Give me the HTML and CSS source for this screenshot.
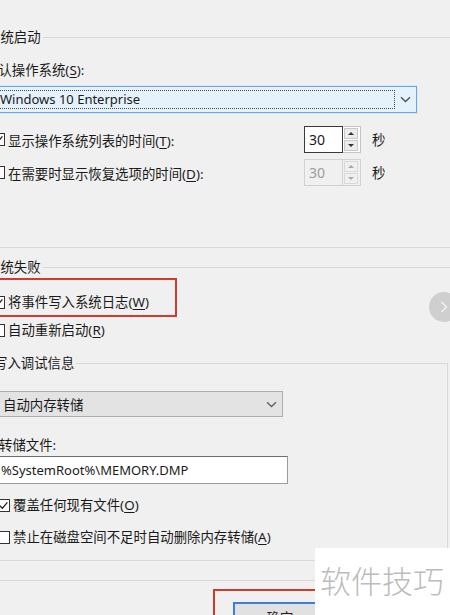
FILE: index.html
```html
<!DOCTYPE html>
<html lang="zh-CN">
<head>
<meta charset="utf-8">
<title>启动和故障恢复</title>
<link rel="stylesheet" href="styles.css">
</head>
<body>
<div class="page">
  <fieldset class="group g1">
    <legend>系统启动</legend>
    <div class="line lbl-os">默认操作系统(<u>S</u>):</div>
    <div class="combo">
      <span class="combo-focus">Windows 10 Enterprise</span>
      <span class="combo-arrow"><svg width="11" height="7" viewBox="0 0 11 7"><path d="M1 1.2 L5.5 5.5 L10 1.2" fill="none" stroke="#505050" stroke-width="1.3"/></svg></span>
    </div>
    <div class="opt-row r1">
      <span class="cb"><svg width="11" height="11" viewBox="0 0 11 11"><path d="M1.8 5.6 L4.4 8.2 L9.4 2.4" fill="none" stroke="#222" stroke-width="1.3"/></svg></span>
      <span class="opt-text">显示操作系统列表的时间(<u>T</u>):</span>
      <span class="spin">
        <span class="spin-val">30</span>
        <span class="spin-btns"><span class="sb up"></span><span class="sb down"></span></span>
      </span>
      <span class="sec">秒</span>
    </div>
    <div class="opt-row r2 disabled">
      <span class="cb"></span>
      <span class="opt-text">在需要时显示恢复选项的时间(<u>D</u>):</span>
      <span class="spin">
        <span class="spin-val">30</span>
        <span class="spin-btns"><span class="sb up"></span><span class="sb down"></span></span>
      </span>
      <span class="sec">秒</span>
    </div>
  </fieldset>

  <fieldset class="group g2">
    <legend>系统失败</legend>
    <div class="hl">
      <div class="cb-row">
        <span class="cb"><svg width="11" height="11" viewBox="0 0 11 11"><path d="M1.8 5.6 L4.4 8.2 L9.4 2.4" fill="none" stroke="#222" stroke-width="1.3"/></svg></span>
        <span>将事件写入系统日志(<u>W</u>)</span>
      </div>
    </div>
    <div class="cb-row restart">
      <span class="cb"></span>
      <span>自动重新启动(<u>R</u>)</span>
    </div>

    <fieldset class="inner">
      <legend>写入调试信息</legend>
      <div class="select">
        <span>自动内存转储</span>
        <svg width="11" height="7" viewBox="0 0 11 7"><path d="M1 1.2 L5.5 5.5 L10 1.2" fill="none" stroke="#606060" stroke-width="1.3"/></svg>
      </div>
      <div class="line lbl-file">转储文件:</div>
      <div class="input">%SystemRoot%\MEMORY.DMP</div>
      <div class="cb-row ow">
        <span class="cb"><svg width="11" height="11" viewBox="0 0 11 11"><path d="M1.8 5.6 L4.4 8.2 L9.4 2.4" fill="none" stroke="#222" stroke-width="1.3"/></svg></span>
        <span>覆盖任何现有文件(<u>O</u>)</span>
      </div>
      <div class="cb-row nodel">
        <span class="cb"></span>
        <span>禁止在磁盘空间不足时自动删除内存转储(<u>A</u>)</span>
      </div>
    </fieldset>
  </fieldset>

  <div class="footer">
    <div class="hl2"><button class="btn" type="button">确定</button></div>
  </div>
</div>

<div class="nav-circle"><svg width="8" height="12" viewBox="0 0 8 12"><path d="M1.5 1 L6.5 6 L1.5 11" fill="none" stroke="#f4f4f4" stroke-width="1.4"/></svg></div>
<div class="watermark">软件技巧</div>
</body>
</html>
```

FILE: styles.css
```css
* { box-sizing: border-box; }
html, body { margin: 0; padding: 0; }
body {
  width: 450px;
  height: 615px;
  overflow: hidden;
  position: relative;
  background: #f0f0f0;
  font-family: "Noto Sans", "Noto Sans CJK SC", sans-serif;
  font-size: 13.4px;
  color: #1a1a1a;
}
u { text-decoration: underline; text-underline-offset: 2px; text-decoration-thickness: 1px; }

.page {
  margin-left: -25px;
  width: 495px;
  padding-top: 30px;
}

fieldset {
  margin: 0;
  padding: 0;
  border: 1px solid #d9d9d9;
  min-width: 0;
}
legend {
  padding: 0 2px;
  margin-left: 9px;
  height: 14px;
  line-height: 14px;
  white-space: nowrap;
}
.line { height: 14px; line-height: 14px; white-space: nowrap; }

/* group 1 */
.g1 { padding-bottom: 61px; }
.lbl-os { margin-top: 19px; margin-left: 9px; }

.combo {
  margin-top: 9px;
  margin-left: 15px;
  width: 426px;
  height: 27px;
  display: flex;
  border: 1px solid #6fa6dd;
  background: #e5f1fb;
  box-shadow: 0 0 0 1px #d6e7f7;
}
.combo-focus {
  flex: 1;
  margin: 3px 0 3px 3px;
  border: 1px dotted #4a4a4a;
  padding-left: 4px;
  font-size: 13px;
  line-height: 17px;
  white-space: nowrap;
}
.combo-arrow {
  width: 21px;
  display: flex;
  align-items: center;
  justify-content: center;
}

.opt-row {
  display: flex;
  align-items: center;
  margin-left: 16px;
  height: 27px;
  white-space: nowrap;
}
.r1 { margin-top: 13px; }
.r2 { margin-top: 6px; }
.cb {
  flex: none;
  width: 13px;
  height: 13px;
  border: 1px solid #333;
  background: #fff;
  display: flex;
  align-items: center;
  justify-content: center;
}
.opt-text { width: 296px; margin-left: 3px; line-height: 14px; padding-top: 2px; }

.spin {
  display: flex;
  width: 57px;
  height: 27px;
  border: 1px solid #c4c4c4;
  background: #fff;
}
.spin-val {
  width: 40px;
  margin: -1px 0 -1px -1px;
  border: 1px solid #3a3a3a;
  padding-left: 4px;
  font-size: 14px;
  line-height: 25px;
}
.spin-btns {
  display: flex;
  flex-direction: column;
  gap: 1px;
  padding: 1px 2px 1px 1px;
}
.sb {
  flex: 1;
  width: 14px;
  border: 1px solid #c9c9c9;
  background: #ececec;
  display: flex;
  align-items: center;
  justify-content: center;
}
.sb.up::after {
  content: "";
  border-left: 3px solid transparent;
  border-right: 3px solid transparent;
  border-bottom: 3px solid #333;
}
.sb.down::after {
  content: "";
  border-left: 3px solid transparent;
  border-right: 3px solid transparent;
  border-top: 3px solid #333;
}
.sec { margin-left: 11px; line-height: 14px; }

.disabled .spin { border-color: #d2d2d2; background: #f0f0f0; }
.disabled .spin-val { border-color: #d2d2d2; color: #9d9d9d; }
.disabled .sb { border-color: #dadada; background: #f0f0f0; }
.disabled .sb.up::after { border-bottom-color: #a8a8a8; }
.disabled .sb.down::after { border-top-color: #a8a8a8; }

/* group 2 */
.g2 { margin-top: 12px; padding-bottom: 19px; }

.hl {
  margin-top: 4px;
  width: 201px;
  height: 39px;
  border: 2px solid #d23a30;
  padding: 15px 0 0 14px;
}
.cb-row {
  display: flex;
  align-items: center;
  gap: 3px;
  height: 14px;
  line-height: 14px;
  white-space: nowrap;
}
.restart { margin-top: 6px; margin-left: 16px; }

.inner {
  margin-top: 19px;
  margin-left: 4px;
  width: 468px;
  padding-bottom: 16px;
}
.inner legend { margin-left: 11px; }

.select {
  margin-top: 21px;
  width: 302px;
  height: 26px;
  display: flex;
  align-items: center;
  justify-content: space-between;
  padding: 0 5px 0 21px;
  border: 1px solid #adadad;
  background: #e3e3e3;
}
.lbl-file { margin-top: 21px; margin-left: 18px; }
.input {
  margin-top: 4px;
  width: 307px;
  height: 28px;
  border: 1px solid #9a9a9a;
  border-top-color: #6d6d6d;
  background: #fff;
  padding-left: 19px;
  font-size: 13px;
  line-height: 26px;
  white-space: nowrap;
}
.ow { margin-top: 14px; margin-left: 16px; }
.nodel { margin-top: 18px; margin-left: 16px; }

/* footer */
.footer { margin-top: 8px; padding-left: 238px; }
.hl2 {
  width: 140px;
  height: 40px;
  border: 2px solid #d23a30;
  border-bottom: none;
  padding: 11px 0 0 18px;
}
.btn {
  display: block;
  width: 94px;
  height: 30px;
  border: 2px solid #3d7fd3;
  background: #e1e1e1;
  font: inherit;
  color: #1f1f1f;
  padding: 0;
}

/* overlays */
.nav-circle {
  position: absolute;
  left: 429px;
  top: 292px;
  width: 30px;
  height: 30px;
  border-radius: 50%;
  background: #cfcfcf;
  display: flex;
  align-items: center;
  justify-content: center;
}
.watermark {
  position: absolute;
  left: 315px;
  top: 548px;
  width: 135px;
  height: 67px;
  background: #fff;
  padding: 12px 0 0 5px;
  font-family: "Noto Sans CJK SC", sans-serif;
  font-weight: 300;
  font-size: 31px;
  line-height: 40px;
  color: #bcbcbc;
  white-space: nowrap;
}
```
